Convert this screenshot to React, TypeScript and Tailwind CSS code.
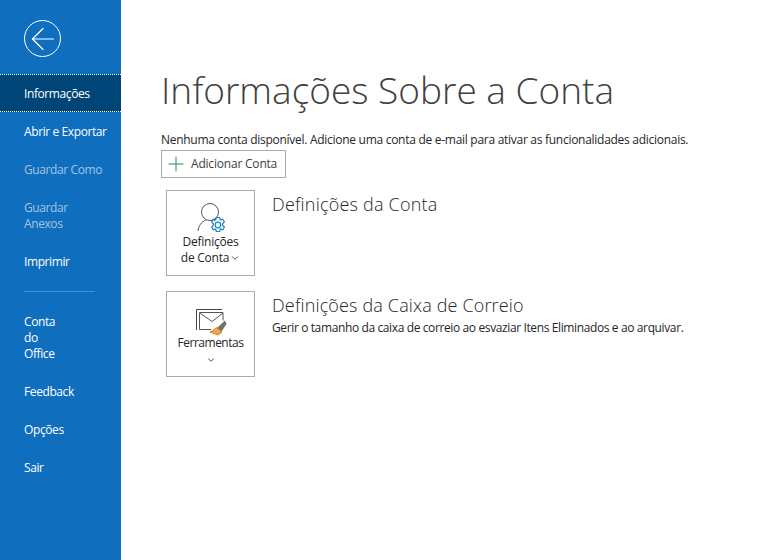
import React from "react";
import { ArrowLeft, ChevronDown, Plus } from "lucide-react";

const font = "font-['Open_Sans','Noto_Sans',sans-serif]";

const NavItem: React.FC<{ label: string[]; active?: boolean; disabled?: boolean }> = ({ label, active, disabled }) => (
  <div
    className={`pl-6 text-[12px] leading-4 tracking-[-0.4px] ${
      active ? "bg-[#004578] text-white border-y border-dotted border-white pt-[11px] pb-[9px] mb-[1px]" : "py-[11px]"
    } ${disabled ? "text-[#a4c4e2]" : "text-white"}`}
  >
    {label.map((l) => (
      <div key={l}>{l}</div>
    ))}
  </div>
);

const AccountIcon = () => (
  <svg width="34" height="36" viewBox="0 0 34 36" fill="none">
    <circle cx="14" cy="12" r="8.500" stroke="#555" strokeWidth="1" />
    <path d="M2 31c.5-5 3.500-9.500 8-11M18 20.500l1 .5" stroke="#555" strokeWidth="1" />
    <path
      d="M20.300 17.500h3.400l.6 2.400 2.400-.8 1.700 2.900-1.800 1.700 0 1.600 1.800 1.700-1.700 2.900-2.400-.8-.6 2.400h-3.400l-.6-2.400-2.400.8-1.700-2.900 1.800-1.700 0-1.600-1.800-1.700 1.700-2.900 2.400.8z"
      stroke="#1b85c9"
      strokeWidth="1.200"
    />
    <circle cx="22" cy="25" r="2.800" stroke="#1b85c9" strokeWidth="1.200" />
  </svg>
);

const ToolsIcon = () => (
  <svg width="32" height="28" viewBox="0 0 32 28" fill="none">
    <path d="M.5 22V1.500H26" stroke="#444" strokeWidth="1" />
    <path d="M3.500 21.500V4.500H27v8M3.500 21.500H15" stroke="#555" strokeWidth="1" />
    <path d="M4 5l12 8.500L27 5" stroke="#555" strokeWidth="1" />
    <path d="M29 12.500l-8 7.500 4.500 3.500 5-7.500z" fill="#707070" />
    <path d="M20.500 19.500l5.500 4.500-4 3-8-3 3-1.500z" fill="#eda748" stroke="#d97f17" strokeWidth="1" />
  </svg>
);

const ActionTile: React.FC<{ children: React.ReactNode }> = ({ children }) => (
  <div className="w-[89px] h-[86px] border border-[#ababab] flex flex-col items-center shrink-0">{children}</div>
);

export default function App() {
  return (
    <div className={`flex w-[760px] h-[560px] bg-white overflow-hidden ${font}`}>
      <nav className="w-[121px] shrink-0 bg-[#106ebe] flex flex-col">
        <div className="h-[74px] pl-6 pt-[20px]">
          <div className="w-[37px] h-[37px] rounded-full border-[1.5px] border-white flex items-center justify-center">
            <ArrowLeft size={36} strokeWidth={0.8} color="white" className="shrink-0" />
          </div>
        </div>
        <NavItem label={["Informações"]} active />
        <NavItem label={["Abrir e Exportar"]} />
        <NavItem label={["Guardar Como"]} disabled />
        <NavItem label={["Guardar", "Anexos"]} disabled />
        <NavItem label={["Imprimir"]} />
        <div className="ml-6 mr-[26px] mt-[10px] mb-[11px] h-px bg-[#3b8fd6]" />
        <NavItem label={["Conta", "do", "Office"]} />
        <NavItem label={["Feedback"]} />
        <NavItem label={["Opções"]} />
        <NavItem label={["Sair"]} />
      </nav>
      <main className="flex-1 pl-10 pt-[62px] text-[#262626]">
        <h1 className="text-[37px] leading-[56px] font-light text-[#404040]">Informações Sobre a Conta</h1>
        <p className="mt-[14px] text-[12px] leading-4 text-[#262626] tracking-[-0.28px]">
          Nenhuma conta disponível. Adicione uma conta de e-mail para ativar as funcionalidades adicionais.
        </p>
        <button className="mt-[2px] h-[28px] w-[125px] border border-[#ababab] flex items-center pl-[2px] gap-[3px] text-[12px] text-[#404040] tracking-[-0.2px]">
          <Plus size={24} strokeWidth={1} color="#1e8e4e" className="shrink-0" />
          Adicionar Conta
        </button>
        <section className="mt-[12px] ml-[5px] flex gap-[17px]">
          <ActionTile>
            <div className="mt-[9px] h-[34px] w-[34px] ml-[5px]">
              <AccountIcon />
            </div>
            <div className="text-[12px] leading-4 text-center text-[#262626] tracking-[-0.25px]">
              Definições
              <div className="flex items-center justify-center gap-[1px]">
                de Conta <ChevronDown size={10} strokeWidth={2} />
              </div>
            </div>
          </ActionTile>
          <h2 className="text-[18px] leading-6 mt-[2px] font-light tracking-[0.2px] text-[#262626]">Definições da Conta</h2>
        </section>
        <section className="mt-[15px] ml-[5px] flex gap-[17px]">
          <ActionTile>
            <div className="mt-[16px] h-[27px] w-[32px] ml-[3px]">
              <ToolsIcon />
            </div>
            <div className="text-[12px] leading-4 text-center text-[#262626] tracking-[-0.5px]">
              Ferramentas
              <div className="flex justify-center pt-1">
                <ChevronDown size={10} strokeWidth={2} />
              </div>
            </div>
          </ActionTile>
          <div className="mt-[2px]">
            <h2 className="text-[18px] leading-6 font-light tracking-[0.15px] text-[#262626]">Definições da Caixa de Correio</h2>
            <p className="mt-[3px] text-[12px] leading-4 text-[#262626] tracking-[-0.38px]">
              Gerir o tamanho da caixa de correio ao esvaziar Itens Eliminados e ao arquivar.
            </p>
          </div>
        </section>
      </main>
    </div>
  );
}
